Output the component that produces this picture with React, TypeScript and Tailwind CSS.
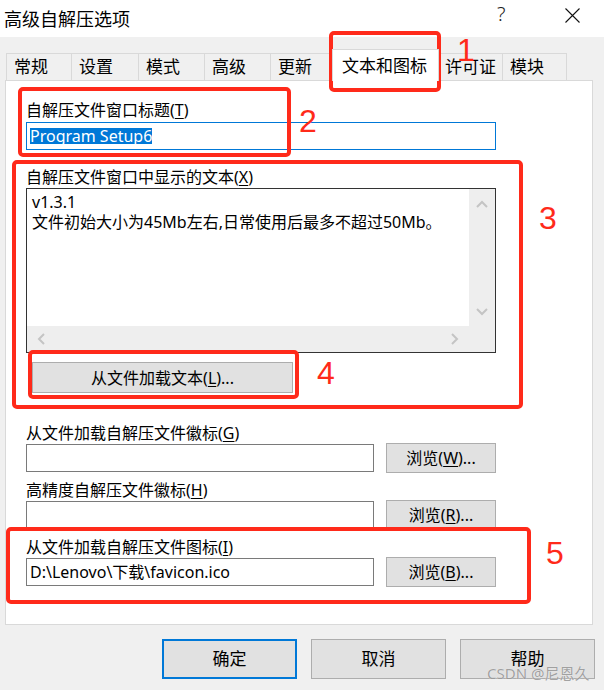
import React from "react";

const tabs: { label: string; w: number; sel?: boolean }[] = [
  { label: "常规", w: 65 },
  { label: "设置", w: 67 },
  { label: "模式", w: 66 },
  { label: "高级", w: 66 },
  { label: "更新", w: 64 },
  { label: "文本和图标", w: 103, sel: true },
  { label: "许可证", w: 65 },
  { label: "模块", w: 65 },
];

function Label({ text, k }: { text: string; k: string }) {
  return (
    <div className="h-[18px] leading-[18px] text-[16px] text-black whitespace-nowrap">
      {text}(<u className="underline-offset-2">{k}</u>)
    </div>
  );
}

function BrowseRow({ k, value }: { k: string; value?: string }) {
  return (
    <div className="flex items-center gap-[12px] h-[30px] mt-[1px]">
      <div className="w-[348px] h-[28px] border border-[#7a7a7a] bg-white flex items-center pl-[3px] text-[16px] text-black whitespace-nowrap">
        {value}
      </div>
      <div className="w-[110px] h-[30px] border border-[#adadad] bg-[#e1e1e1] flex items-center justify-center text-[16px] text-black">
        浏览(<u className="underline-offset-2">{k}</u>)...
      </div>
    </div>
  );
}

function Chevron({ dir }: { dir: "up" | "down" | "left" | "right" }) {
  const pts =
    dir === "up"
      ? "1,7 6,2 11,7"
      : dir === "down"
      ? "1,2 6,7 11,2"
      : dir === "left"
      ? "7,1 2,6 7,11"
      : "2,1 7,6 2,11";
  const isV = dir === "up" || dir === "down";
  return (
    <svg width={isV ? 12 : 9} height={isV ? 9 : 12} viewBox={isV ? "0 0 12 9" : "0 0 9 12"}>
      <polyline points={pts} fill="none" stroke="#c4c4c4" strokeWidth="2" />
    </svg>
  );
}

function RedBox({ cls }: { cls: string }) {
  return <div className={`absolute border-[4px] border-[#ff2a1a] rounded-[5px] ${cls}`} />;
}

export default function App() {
  return (
    <div className="relative w-[604px] h-[690px] bg-[#f0f0f0] overflow-hidden font-['Noto_Sans','Noto_Sans_CJK_SC',sans-serif] text-black">
      {/* Title bar */}
      <div className="h-[37px] bg-white flex items-center relative">
        <div className="pl-[4px] text-[18px] leading-none">高级自解压选项</div>
        <div className="absolute left-[497px] top-[3px] text-[20px] leading-[22px] font-light text-[#222]">?</div>
        <svg className="absolute left-[565px] top-[8px]" width="15" height="15" viewBox="0 0 15 15">
          <path d="M0.5 0.5 L14.5 14.5 M14.5 0.5 L0.5 14.5" stroke="#111" strokeWidth="1.1" />
        </svg>
      </div>

      {/* Tabs */}
      <div className="flex items-end h-[27px] mt-[16px] pl-[6px]">
        {tabs.map((t, i) =>
          t.sel ? (
            <div
              key={i}
              className="relative z-10 h-[32px] -mb-px -mx-[2px] bg-white border border-b-0 border-[#d9d9d9] flex items-center pl-[9px] text-[17px] whitespace-nowrap"
              style={{ width: t.w + 4 }}
            >
              {t.label}
            </div>
          ) : (
            <div
              key={i}
              className={`h-[27px] border-t border-l border-[#d9d9d9] flex items-center pl-[7px] text-[17px] whitespace-nowrap ${
                i === tabs.length - 1 ? "border-r" : ""
              }`}
              style={{ width: t.w }}
            >
              {t.label}
            </div>
          )
        )}
      </div>

      {/* Panel */}
      <div className="ml-[5px] w-[588px] h-[545px] bg-white border border-[#d9d9d9] pt-[20px] pl-[20px]">
        <Label text="自解压文件窗口标题" k="T" />
        <div className="mt-[3px] w-[470px] h-[28px] border border-[#0078d7] flex items-center pl-[3px]">
          <span className="bg-[#0078d7] text-white text-[16px] leading-[16px] h-[16px] whitespace-nowrap">Program Setup6</span>
        </div>

        <div className="mt-[18px]">
          <Label text="自解压文件窗口中显示的文本" k="X" />
        </div>
        <div className="mt-[2px] w-[470px] h-[165px] border border-[#333] grid grid-cols-[1fr_26px] grid-rows-[1fr_26px] bg-white">
          <div className="pl-[5px] pt-[3px] text-[16px] leading-[20px] whitespace-nowrap overflow-hidden">
            <div>v1.3.1</div>
            <div>文件初始大小为45Mb左右,日常使用后最多不超过50Mb。</div>
          </div>
          <div className="bg-[#eeeeee] flex flex-col justify-between">
            <div className="h-[30px] flex items-center justify-center">
              <Chevron dir="up" />
            </div>
            <div className="h-[30px] flex items-center justify-center">
              <Chevron dir="down" />
            </div>
          </div>
          <div className="bg-[#eeeeee] flex justify-between">
            <div className="w-[28px] flex items-center justify-center">
              <Chevron dir="left" />
            </div>
            <div className="w-[30px] flex items-center justify-center">
              <Chevron dir="right" />
            </div>
          </div>
          <div className="bg-[#eeeeee]" />
        </div>

        <div className="mt-[9px] ml-[6px] w-[261px] h-[31px] border border-[#adadad] bg-[#e1e1e1] flex items-center justify-center text-[16px]">
          从文件加载文本(<u className="underline-offset-2">L</u>)...
        </div>

        <div className="mt-[31px]">
          <Label text="从文件加载自解压文件徽标" k="G" />
        </div>
        <BrowseRow k="W" />

        <div className="mt-[8px]">
          <Label text="高精度自解压文件徽标" k="H" />
        </div>
        <BrowseRow k="R" />

        <div className="mt-[8px]">
          <Label text="从文件加载自解压文件图标" k="I" />
        </div>
        <BrowseRow k="B" value={"D:\\Lenovo\\下载\\favicon.ico"} />
      </div>

      {/* Bottom buttons */}
      <div className="flex justify-end gap-[14px] pr-[9px] mt-[14px]">
        <div className="w-[135px] h-[40px] border-2 border-[#0078d7] bg-[#e1e1e1] flex items-center justify-center text-[17px]">确定</div>
        <div className="w-[135px] h-[40px] border border-[#adadad] bg-[#e1e1e1] flex items-center justify-center text-[17px]">取消</div>
        <div className="w-[135px] h-[40px] border border-[#adadad] bg-[#e1e1e1] flex items-center justify-center text-[17px]">帮助</div>
      </div>

      {/* Watermark */}
      <div className="absolute left-[487px] top-[663px] text-[15px] leading-[20px] text-[#9a9a9a] opacity-90 whitespace-nowrap [text-shadow:0_0_1px_#ffffff]">
        CSDN @尼恩久
      </div>

      {/* Red annotation boxes */}
      <RedBox cls="left-[329px] top-[31px] w-[112px] h-[61px]" />
      <RedBox cls="left-[18px] top-[87px] w-[273px] h-[70px]" />
      <RedBox cls="left-[12px] top-[160px] w-[511px] h-[249px]" />
      <RedBox cls="left-[28px] top-[350px] w-[271px] h-[49px]" />
      <RedBox cls="left-[6px] top-[527px] w-[525px] h-[77px]" />

      {/* Numbers */}
      <div className="absolute left-[457px] top-[34px] text-[32px] leading-[32px] text-[#ff2a1a] font-['Liberation_Sans',sans-serif]">1</div>
      <div className="absolute left-[299px] top-[105px] text-[32px] leading-[32px] text-[#ff2a1a] font-['Liberation_Sans',sans-serif]">2</div>
      <div className="absolute left-[539px] top-[202px] text-[32px] leading-[32px] text-[#ff2a1a] font-['Liberation_Sans',sans-serif]">3</div>
      <div className="absolute left-[317px] top-[357px] text-[32px] leading-[32px] text-[#ff2a1a] font-['Liberation_Sans',sans-serif]">4</div>
      <div className="absolute left-[546px] top-[537px] text-[32px] leading-[32px] text-[#ff2a1a] font-['Liberation_Sans',sans-serif]">5</div>
    </div>
  );
}
